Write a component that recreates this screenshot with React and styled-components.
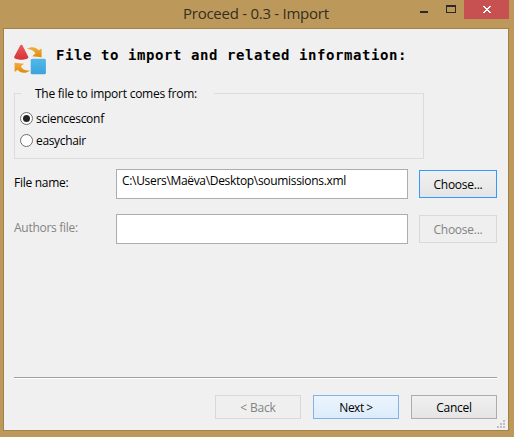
import React from "react";
import styled, { createGlobalStyle } from "styled-components";

const GlobalStyle = createGlobalStyle`
  * { box-sizing: border-box; }
  html, body { margin: 0; padding: 0; overflow: hidden; }
  body { font-family: "Open Sans", "Noto Sans", sans-serif; font-size: 12px; color: #000; }
`;

const Window = styled.div`
  width: 514px;
  height: 437px;
  display: flex;
  flex-direction: column;
  padding: 0 5px 6px 3px;
  background: #bc995b;
`;

const TitleBar = styled.header`
  height: 28px;
  flex: none;
  display: flex;
  align-items: flex-start;
`;

const Title = styled.h1`
  flex: 1;
  margin: 0;
  padding-left: 180px;
  font-size: 15px;
  font-weight: 400;
  line-height: 27px;
  letter-spacing: -0.26px;
  white-space: nowrap;
  color: #342d22;
`;

const WindowControls = styled.div`
  display: flex;
`;

const ControlButton = styled.button`
  width: ${(p) => p.$width}px;
  height: 19px;
  padding: 0;
  border: 0;
  display: block;
  background: ${(p) => (p.$close ? "#c75050" : "transparent")};

  svg { display: block; }
`;

const Client = styled.main`
  flex: 1;
  min-height: 0;
  display: flex;
  flex-direction: column;
  padding: 15px 0 0 10px;
  background: #f0f0f0;
  border: 1px solid #a28249;
`;

const Heading = styled.div`
  display: flex;
  height: 49px;
`;

const Logo = styled.svg`
  display: block;
  flex: none;
  width: 32px;
  height: 32px;
`;

const HeadingText = styled.h2`
  margin: 0 0 0 10px;
  font: 700 14px/22px "DejaVu Sans Mono", monospace;
  letter-spacing: 0.57px;
  white-space: nowrap;
`;

const Group = styled.section`
  width: 410px;
  height: 66px;
  border: 1px solid #dcdcdc;
`;

const Legend = styled.div`
  width: 193px;
  height: 16px;
  margin: -8px 0 0 6px;
  padding-left: 14px;
  background: #f0f0f0;
  line-height: 16px;
  white-space: nowrap;
  letter-spacing: -0.25px;
`;

const RadioRow = styled.label`
  display: flex;
  align-items: center;
  gap: 3px;
  height: 22px;
  margin-left: 5px;
  line-height: 22px;
  letter-spacing: ${(p) => p.$spacing}px;

  &:first-of-type { margin-top: 6px; }
`;

const RadioMark = styled.span`
  width: 13px;
  height: 13px;
  margin-bottom: 1px;
  display: grid;
  place-items: center;
  border: 1px solid #707070;
  border-radius: 50%;
  background: #fff;

  &::after {
    content: "";
    width: 7px;
    height: 7px;
    border-radius: 50%;
    background: ${(p) => (p.$checked ? "#222" : "transparent")};
  }
`;

const FieldRow = styled.div`
  display: grid;
  grid-template-columns: 102px 292px 78px;
  align-items: center;
  height: 30px;
  margin-top: ${(p) => p.$top}px;
`;

const FieldLabel = styled.label`
  line-height: 16px;
  padding-bottom: 2px;
  color: ${(p) => (p.$disabled ? "#838383" : "#000")};
  letter-spacing: -0.28px;
  white-space: nowrap;
`;

const FieldBox = styled.div`
  height: 30px;
  padding: 2px 5px;
  border: 1px solid #abadb3;
  background: #fff;
  line-height: 17px;
  letter-spacing: -0.32px;
  white-space: nowrap;
`;

const looks = {
  normal: { border: "#acacac", fill: "linear-gradient(#f0f0f0, #e5e5e5)", text: "#000" },
  focused: { border: "#3399ff", fill: "linear-gradient(#f0f0f0, #e5e5e5)", text: "#000" },
  hot: { border: "#7eb4ea", fill: "linear-gradient(#ecf4fc, #dcecfc)", text: "#000" },
  disabled: { border: "#d9d9d9", fill: "#efefef", text: "#838383" },
};

const Button = styled.button`
  width: ${(p) => p.$width}px;
  height: ${(p) => p.$height}px;
  padding: 0;
  border: 1px solid ${(p) => looks[p.$look].border};
  background: ${(p) => looks[p.$look].fill};
  color: ${(p) => looks[p.$look].text};
  font: inherit;
  line-height: ${(p) => p.$height - 3}px;
  letter-spacing: ${(p) => p.$spacing}px;
  white-space: nowrap;
`;

const FieldButton = styled(Button)`
  margin-left: 11px;
`;

const Separator = styled.hr`
  width: 483px;
  height: 2px;
  flex: none;
  margin: auto 0 0;
  border: 0;
  border-top: 1px solid #a0a0a0;
  background: #fff;
`;

const Footer = styled.footer`
  display: flex;
  justify-content: flex-end;
  gap: 12px;
  width: 483px;
  height: 41px;
  padding-top: 16px;
`;

const SizeGrip = styled.svg`
  display: block;
  flex: none;
  align-self: flex-end;
  width: 8px;
  height: 8px;
  margin: 0 3px 2px 0;
`;

const ProceedLogo = () => (
  <Logo viewBox="0 0 32 32" aria-hidden="true">
    <defs>
      <linearGradient id="cone" x2="0" y2="1">
        <stop stopColor="#f05a5a" />
        <stop offset="1" stopColor="#d43337" />
      </linearGradient>
      <linearGradient id="cube" x2="0" y2="1">
        <stop stopColor="#50b9e9" />
        <stop offset="1" stopColor="#3ba3da" />
      </linearGradient>
      <linearGradient id="arrow" x2="0" y2="1">
        <stop stopColor="#f1ae3b" />
        <stop offset="1" stopColor="#e08a0c" />
      </linearGradient>
    </defs>
    <path d="M13 5C17 2 22 3 24.6 6.2L27.6 4.4V13.2L18.3 12.2L21.5 9.3C19.4 6.2 16.5 5.2 13 5Z" fill="url(#arrow)" />
    <path d="M0.5 18.7L10 19.8L6.9 22.2C8.5 25.8 12 27 16 26.4C12 29.9 6.3 29.3 3.6 25.7L0.7 28Z" fill="url(#arrow)" />
    <path d="M6.2 1.5Q7.4-.2 8.5 1.5L14.4 13.1C14.4 16.7 0.1 16.7 0.1 13.1Z" fill="url(#cone)" />
    <rect x="16.7" y="14.8" width="15.2" height="15.5" rx="1.5" fill="url(#cube)" />
  </Logo>
);

export default function App() {
  return (
    <>
      <GlobalStyle />
      <Window>
        <TitleBar>
          <Title>Proceed - 0.3 - Import</Title>
          <WindowControls>
            <ControlButton $width={27} aria-label="Minimize">
              <svg width="27" height="19"><path d="M10 11h8v2h-8z" fill="#292929" /></svg>
            </ControlButton>
            <ControlButton $width={27} aria-label="Maximize">
              <svg width="27" height="19"><path fillRule="evenodd" d="M9 5h10v8H9zM10 7v5h8V7z" fill="#292929" /></svg>
            </ControlButton>
            <ControlButton $width={45} $close aria-label="Close">
              <svg width="45" height="19" shapeRendering="crispEdges">
                <path d="M19 6h2v1h1v1h2V7h1V6h2v1h-1v1h-1v1h-1v1h1v1h1v1h1v1h-2v-1h-1v-1h-2v1h-1v1h-2v-1h1v-1h1v-1h1V9h-1V8h-1V7h-1z" fill="#fff" />
              </svg>
            </ControlButton>
          </WindowControls>
        </TitleBar>

        <Client>
          <Heading>
            <ProceedLogo />
            <HeadingText>File to import and related information:</HeadingText>
          </Heading>

          <Group>
            <Legend>The file to import comes from:</Legend>
            <RadioRow $spacing={-0.27}><RadioMark $checked />sciencesconf</RadioRow>
            <RadioRow $spacing={-0.35}><RadioMark />easychair</RadioRow>
          </Group>

          <FieldRow $top={10}>
            <FieldLabel>File name:</FieldLabel>
            <FieldBox>C:\Users\Maëva\Desktop\soumissions.xml</FieldBox>
            <FieldButton $width={78} $height={28} $look="focused" $spacing={-0.25}>Choose...</FieldButton>
          </FieldRow>
          <FieldRow $top={15}>
            <FieldLabel $disabled>Authors file:</FieldLabel>
            <FieldBox />
            <FieldButton $width={78} $height={28} $look="disabled" $spacing={-0.25} disabled>Choose...</FieldButton>
          </FieldRow>

          <Separator />
          <Footer>
            <Button $width={86} $height={24} $look="disabled" $spacing={-0.2} disabled>&lt; Back</Button>
            <Button $width={86} $height={24} $look="hot" $spacing={-0.5}>Next &gt;</Button>
            <Button $width={86} $height={24} $look="normal" $spacing={-0.25}>Cancel</Button>
          </Footer>
          <SizeGrip viewBox="0 0 8 8" aria-hidden="true">
            <path d="M6 0h2v2H6zM3 3h2v2H3zM6 3h2v2H6zM0 6h2v2H0zM3 6h2v2H3zM6 6h2v2H6z" fill="#bfbfbf" />
          </SizeGrip>
        </Client>
      </Window>
    </>
  );
}
